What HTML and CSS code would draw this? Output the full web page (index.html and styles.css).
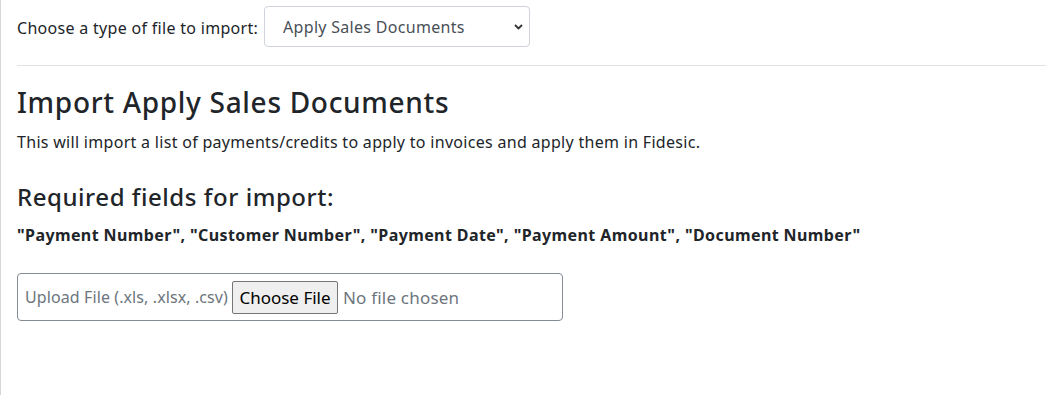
FILE: index.html
```html
<!DOCTYPE html>
<html lang="en">
<head>
  <meta charset="UTF-8" />
  <meta name="viewport" content="width=device-width, initial-scale=1.0" />
  <title>Import</title>
  <link rel="stylesheet" href="styles.css">
</head>
<body>
  <div class="page">
    <div class="type-row">
      <label class="type-label" for="importType">Choose a type of file to import:</label>
      <div class="select-wrap">
        <select class="type-select" id="importType">
          <option>Apply Sales Documents</option>
          <option>Customers</option>
          <option>Invoices</option>
        </select>
        <svg class="chevron" width="9" height="6" viewBox="0 0 9 6">
          <path d="M1 1 L4.5 4.5 L8 1" fill="none" stroke="#333" stroke-width="1.8" />
        </svg>
      </div>
    </div>

    <hr class="divider">

    <h3 class="import-title">Import Apply Sales Documents</h3>
    <p class="import-desc">This will import a list of payments/credits to apply to invoices and apply them in Fidesic.</p>

    <h4 class="fields-title">Required fields for import:</h4>
    <p class="fields-list">"Payment Number", "Customer Number", "Payment Date", "Payment Amount", "Document Number"</p>

    <div class="upload-box">
      <label class="upload-label" for="uploadFile">Upload File (.xls, .xlsx, .csv)</label>
      <input class="upload-input" type="file" id="uploadFile" accept=".xls,.xlsx,.csv">
    </div>
  </div>
</body>
</html>
```
FILE: styles.css
```css
* {
  box-sizing: border-box;
  margin: 0;
  padding: 0;
}

body {
  font-family: "Noto Sans", "Open Sans", sans-serif;
  font-size: 16px;
  letter-spacing: 0.3px;
  color: #212529;
  background: #fff;
}

.page {
  border-left: 1px solid #d6d6d6;
  min-height: 100vh;
  padding: 6px 0 0 16px;
}

.type-row {
  display: flex;
  align-items: center;
  gap: 6px;
}

.type-label {
  padding-top: 2px;
}

.select-wrap {
  position: relative;
}

.type-select {
  appearance: none;
  width: 266px;
  height: 41px;
  padding: 0 30px 0 18px;
  border: 1px solid #ced4da;
  border-radius: 4px;
  background: #fff;
  font-family: inherit;
  font-size: 16px;
  letter-spacing: 0.3px;
  color: #495057;
}

.chevron {
  position: absolute;
  right: 7px;
  top: 18px;
  pointer-events: none;
}

.divider {
  border: 0;
  border-top: 1px solid #e2e3e5;
  margin: 18px 0 20px;
}

.import-title {
  font-size: 28px;
  font-weight: 500;
  line-height: 1.2;
  letter-spacing: 0.7px;
  margin-bottom: 10px;
}

.import-desc {
  line-height: 1.5;
  margin-bottom: 29px;
}

.fields-title {
  font-size: 24px;
  font-weight: 500;
  line-height: 1.2;
  letter-spacing: 0.55px;
  margin-bottom: 12px;
}

.fields-list {
  font-weight: 700;
  line-height: 1.5;
  letter-spacing: 0.4px;
  margin-bottom: 26px;
}

.upload-box {
  display: flex;
  align-items: center;
  width: 546px;
  height: 48px;
  padding: 0 7px;
  border: 1px solid #858c93;
  border-radius: 4px;
}

.upload-label {
  flex-shrink: 0;
  white-space: nowrap;
  color: #6c757d;
  letter-spacing: 0.1px;
  margin-right: 4px;
}

.upload-input {
  flex: 1;
  min-width: 0;
  font-family: inherit;
  font-size: 17px;
  letter-spacing: 0.2px;
  color: #6c757d;
}

.upload-input::file-selector-button {
  width: 106px;
  height: 33px;
  padding: 0 6px;
  margin-right: 5px;
  font-family: inherit;
  font-size: 17px;
  color: #000;
  background: #efefef;
  border: 1px solid #767676;
  border-radius: 2px;
}
```
